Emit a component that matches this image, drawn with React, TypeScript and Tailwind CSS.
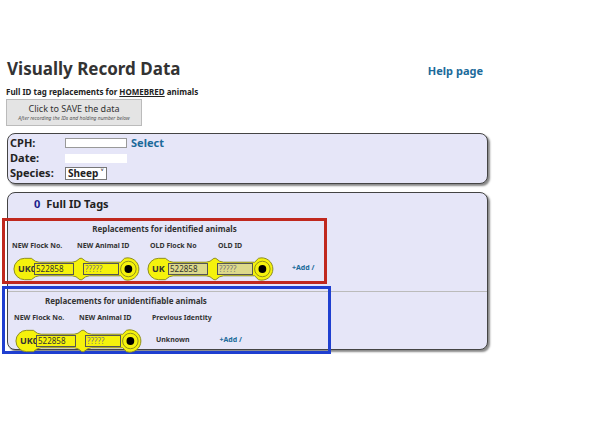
import React from 'react';

const Tag = ({ prefix, grey }: { prefix: string; grey?: boolean }) => (
  <div className="relative w-[128px] h-[26px] shrink-0">
    <svg width="128" height="26" viewBox="0 0 132 26" className="absolute inset-0">
      <g fill="#f5f20c" stroke="#8a8a20" strokeWidth="1">
        <path d="M13 2 A11 11 0 0 0 13 24 L20 24 Q24 20 28 20 L62 20 Q66 20 70 24 L72 24 Q76 20 80 20 L112 20 L116 24 A11.5 11.5 0 1 0 116 2 L112 6 L80 6 Q76 6 72 2 L70 2 Q66 6 62 6 L28 6 Q24 6 20 2 Z" />
      </g>
      <circle cx="120" cy="13" r="8" fill="#f5f20c" stroke="#8a8a20" />
      <circle cx="120" cy="13" r="4" fill="#000" />
    </svg>
    <span className="absolute left-[6px] top-[8px] text-[9px] font-bold leading-none">{prefix}</span>
    <div className={`absolute left-[22px] top-[7px] w-[40px] h-[12px] border border-[#555] ${grey ? 'bg-[#ddd98a]' : 'bg-[#f5f20c]'} text-[8px] leading-[10px] pl-[1px] font-normal text-[#333]`}>522858</div>
    <div className={`absolute left-[71px] top-[7px] w-[36px] h-[12px] border border-[#555] ${grey ? 'bg-[#ddd98a]' : 'bg-[#f5f20c]'} text-[8px] leading-[10px] pl-[1px] font-normal text-[#777]`}>?????</div>
  </div>
);

export default function App() {
  return (
    <div className="w-[592px] h-[444px] bg-white relative font-['Liberation_Sans'] text-[#222]">
      <div className="pt-[56px] px-[7px] flex items-baseline justify-between w-[490px]">
        <h1 className="text-[17px] font-bold text-[#333]">Visually Record Data</h1>
        <a className="text-[11px] font-bold text-[#1b6a9a]">Help page</a>
      </div>
      <div className="px-[6px] mt-[4px] text-[8px] font-bold">
        Full ID tag replacements for <span className="underline">HOMEBRED</span> animals
      </div>
      <div className="ml-[6px] mt-[1px] w-[136px] h-[27px] bg-[#e4e4e4] border border-[#bbb] flex flex-col items-center justify-center">
        <span className="text-[9px] text-[#333] leading-none">Click to SAVE the data</span>
        <span className="text-[5px] italic text-[#555] mt-[3px] leading-none whitespace-nowrap">After recording the IDs and holding number below</span>
      </div>
      <div className="ml-[7px] mt-[7px] w-[481px] h-[51px] bg-[#e6e6f8] border border-[#444] rounded-[8px] shadow-[2px_2px_2px_#888] px-[2px] py-[2px] text-[11px] font-bold">
        <div className="flex items-center h-[15px]"><span className="w-[55px]">CPH:</span><div className="w-[62px] h-[10px] bg-white border border-[#999]" /><span className="ml-[4px] text-[#1b6a9a]">Select</span></div>
        <div className="flex items-center h-[15px]"><span className="w-[55px]">Date:</span><div className="w-[62px] h-[9px] bg-white" /></div>
        <div className="flex items-center h-[15px]"><span className="w-[55px]">Species:</span><div className="h-[13px] bg-white border border-[#777] px-[2px] text-[10px] leading-[11px]">Sheep ˅</div></div>
      </div>
      <div className="ml-[7px] mt-[8px] w-[481px] h-[158px] bg-[#e6e6f8] border border-[#444] rounded-[8px] shadow-[2px_2px_2px_#888] relative">
        <div className="pt-[3px] pl-[26px] text-[11px] font-bold"><span className="text-[#1a1a8c] mr-[6px]">0</span>Full ID Tags</div>
        <div className="absolute left-0 right-0 top-[98px] h-px bg-[#bbb]" />
      </div>
      <div className="absolute left-[2px] top-[218px] w-[325px] h-[66px] border-[3px] border-[#c0281e] px-[7px] text-[7px] font-bold text-[#333] whitespace-nowrap">
        <div className="text-center text-[8px] mt-[2px] mb-[6px]">Replacements for identified animals</div>
        <div className="flex"><span className="w-[65px]">NEW Flock No.</span><span className="w-[73px]">NEW Animal ID</span><span className="w-[68px]">OLD Flock No</span><span>OLD ID</span></div>
        <div className="flex items-center mt-[4px] gap-[6px]"><Tag prefix="UK0" /><Tag prefix="UK" grey /><span className="text-[#1b6a9a] ml-[12px]">+Add /</span></div>
      </div>
      <div className="absolute left-[2px] top-[286px] w-[329px] h-[68px] border-[3px] border-[#1f3fd0] px-[9px] text-[7px] font-bold text-[#333] whitespace-nowrap">
        <div className="text-[8px] mt-[6px] mb-[6px] ml-[31px]">Replacements for unidentifiable animals</div>
        <div className="flex"><span className="w-[65px]">NEW Flock No.</span><span className="w-[73px]">NEW Animal ID</span><span>Previous Identity</span></div>
        <div className="flex items-center mt-[4px]"><Tag prefix="UK0" /><span className="ml-[14px]">Unknown</span><span className="ml-[30px] text-[#1b6a9a]">+Add /</span></div>
      </div>
    </div>
  );
}
